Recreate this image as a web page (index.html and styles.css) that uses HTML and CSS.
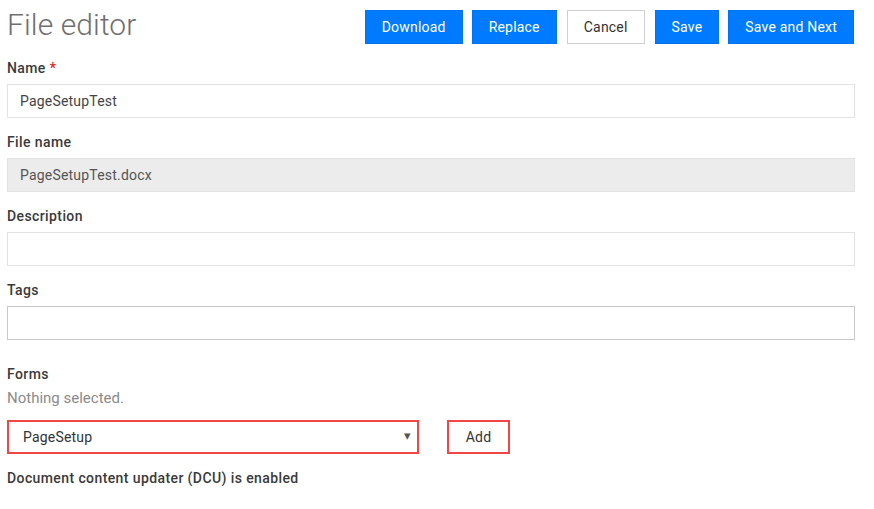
FILE: index.html
```html
<!DOCTYPE html>
<html>
<head>
    <title>File editor</title>
    <meta charset="UTF-8">
    <link rel="stylesheet" href="styles.css">
</head>
<body>
    <div class="editor">
        <div class="header">
            <h1>File editor</h1>
            <div class="actions">
                <button class="btn btn-primary">Download</button>
                <button class="btn btn-primary">Replace</button>
                <button class="btn btn-default">Cancel</button>
                <button class="btn btn-primary">Save</button>
                <button class="btn btn-primary">Save and Next</button>
            </div>
        </div>

        <div class="field">
            <label for="name">Name <span class="required">*</span></label>
            <input type="text" id="name" value="PageSetupTest">
        </div>

        <div class="field">
            <label for="filename">File name</label>
            <input type="text" id="filename" value="PageSetupTest.docx" disabled>
        </div>

        <div class="field">
            <label for="description">Description</label>
            <input type="text" id="description">
        </div>

        <div class="field field-tags">
            <label for="tags">Tags</label>
            <input type="text" id="tags" class="tags-input">
        </div>

        <div class="forms">
            <label>Forms</label>
            <p class="empty">Nothing selected.</p>
            <div class="forms-row">
                <div class="select-wrap">
                    <select id="forms">
                        <option>PageSetup</option>
                    </select>
                </div>
                <button class="btn btn-add">Add</button>
            </div>
        </div>

        <p class="dcu">Document content updater (DCU) is enabled</p>
    </div>
</body>
</html>
```

FILE: styles.css
```css
body {
    margin: 0;
    font-family: Roboto, 'Liberation Sans', sans-serif;
    background-color: #fff;
    color: #333;
}

.editor {
    width: 848px;
    padding: 10px 7px;
}

.header {
    display: flex;
    justify-content: space-between;
    align-items: flex-start;
    height: 34px;
    margin-bottom: 14px;
}

h1 {
    margin: 0;
    font-size: 30px;
    font-weight: 300;
    color: #6f6f6f;
    line-height: 30px;
    letter-spacing: 0.1px;
}

.actions {
    display: flex;
    gap: 9px;
    margin-right: 1px;
}

.btn {
    height: 34px;
    padding: 0 16px;
    font-family: Roboto, 'Liberation Sans', sans-serif;
    font-size: 14px;
    letter-spacing: 0.2px;
    border-radius: 0;
    cursor: pointer;
}

.btn-primary {
    background-color: #007bff;
    border: 1px solid #0074f0;
    color: #fff;
}

.btn-default {
    background-color: #fff;
    border: 1px solid #cfcfcf;
    color: #333;
    margin: 0 1px;
}

.field {
    margin-bottom: 14px;
}

.field-tags {
    margin-bottom: 24px;
}

label {
    display: block;
    height: 20px;
    line-height: 20px;
    margin-bottom: 6px;
    font-size: 14px;
    font-weight: 500;
    letter-spacing: 0.4px;
    color: #3a3a3a;
}

.required {
    color: #e02020;
}

input[type="text"] {
    box-sizing: border-box;
    display: block;
    width: 848px;
    height: 34px;
    padding: 0 12px;
    border: 1px solid #e2e2e2;
    font-family: Roboto, 'Liberation Sans', sans-serif;
    font-size: 14px;
    letter-spacing: 0.2px;
    color: #444;
    background-color: #fff;
    outline: none;
}

input[disabled] {
    background-color: #ececec;
    color: #555;
}

.tags-input {
    border-color: #c8c8c8 !important;
}

.forms label {
    margin-bottom: 4px;
}

.empty {
    margin: 0 0 12px;
    height: 20px;
    line-height: 20px;
    font-size: 15px;
    color: #8a8a8a;
}

.forms-row {
    display: flex;
    align-items: center;
    gap: 28px;
}

.select-wrap {
    position: relative;
    width: 412px;
}

.select-wrap::after {
    content: "\25BE";
    position: absolute;
    right: 8px;
    top: 8px;
    font-size: 13px;
    color: #555;
    pointer-events: none;
}

select {
    box-sizing: border-box;
    width: 412px;
    height: 34px;
    padding: 0 14px;
    border: 2px solid #f04646;
    border-radius: 0;
    background-color: #fff;
    font-family: Roboto, 'Liberation Sans', sans-serif;
    font-size: 14px;
    letter-spacing: 0.2px;
    color: #333;
    appearance: none;
    -webkit-appearance: none;
}

.btn-add {
    width: 63px;
    padding: 0;
    background-color: #fff;
    border: 2px solid #f04646;
    color: #333;
}

.dcu {
    margin: 14px 0 0;
    height: 20px;
    line-height: 20px;
    font-size: 14px;
    font-weight: 500;
    letter-spacing: 0.4px;
    color: #3a3a3a;
}
```
